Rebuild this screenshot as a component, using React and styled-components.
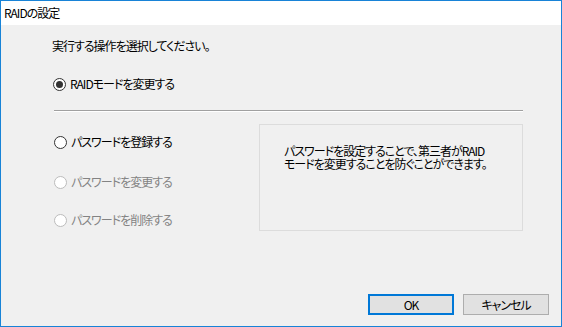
import React from "react";
import styled, { createGlobalStyle } from "styled-components";

const Global = createGlobalStyle`
  html, body { margin: 0; padding: 0; background: #f0f0f0; }
  body { font-family: "Noto Sans CJK JP", "Noto Sans", sans-serif; font-size: 12px; color: #000; }
  * { box-sizing: border-box; }
`;

const Window = styled.div`
  width: 562px;
  height: 327px;
  border: 1px solid #1883d7;
  display: flex;
  flex-direction: column;
  background: #f0f0f0;
  font-feature-settings: "palt";
  letter-spacing: -1px;
`;

const TitleBar = styled.div`
  height: 24px;
  background: #ffffff;
  display: flex;
  align-items: center;
  padding-left: 3px;
  font-size: 12px;
  line-height: 16px;
`;

const Body = styled.div`
  flex: 1;
  display: flex;
  flex-direction: column;
  padding: 13px 12px 11px 51px;
`;

const Prompt = styled.div`
  line-height: 16px;
  height: 16px;
`;

const RadioRow = styled.label`
  display: flex;
  align-items: center;
  gap: 4px;
  height: 16px;
  line-height: 16px;
  margin-left: 1px;
  margin-top: ${(p) => p.$top || 0}px;
  color: ${(p) => (p.$disabled ? "#838383" : "#000")};
`;

const Circle = styled.span`
  width: 13px;
  height: 13px;
  border-radius: 50%;
  border: 1px solid ${(p) => (p.$disabled ? "#bcbcbc" : "#333333")};
  background: #ffffff;
  display: flex;
  align-items: center;
  justify-content: center;
  flex: none;
  &::after {
    content: "";
    display: ${(p) => (p.$checked ? "block" : "none")};
    width: 7px;
    height: 7px;
    border-radius: 50%;
    background: #333333;
  }
`;

const Separator = styled.div`
  margin: 18px 0 0 2px;
  width: 469px;
  height: 2px;
  border-top: 1px solid #a0a0a0;
  border-bottom: 1px solid #ffffff;
`;

const Lower = styled.div`
  display: flex;
  margin-top: 12px;
  margin-left: 1px;
`;

const Options = styled.div`
  width: 206px;
  display: flex;
  flex-direction: column;
  padding-top: 10px;
`;

const InfoBox = styled.div`
  width: 264px;
  height: 107px;
  border: 1px solid #dcdcdc;
  padding: 19px 0 0 24px;
  line-height: 13px;
  white-space: nowrap;
`;

const Footer = styled.div`
  margin-top: auto;
  display: flex;
  justify-content: flex-end;
  gap: 9px;
`;

const Button = styled.button`
  width: 86px;
  height: 21px;
  padding: 0;
  background: #e1e1e1;
  border: ${(p) => (p.$default ? "2px solid #0078d7" : "1px solid #adadad")};
  font-family: inherit;
  font-size: 12px;
  color: #000;
  line-height: 16px;
  letter-spacing: -1px;
  font-feature-settings: "palt";
`;

function Radio({ label, checked, disabled, top }) {
  return (
    <RadioRow $disabled={disabled} $top={top}>
      <Circle $checked={checked} $disabled={disabled} />
      <span>{label}</span>
    </RadioRow>
  );
}

export default function App() {
  return (
    <>
      <Global />
      <Window>
        <TitleBar>RAIDの設定</TitleBar>
        <Body>
          <Prompt>実行する操作を選択してください。</Prompt>
          <Radio label="RAIDモードを変更する" checked top={22} />
          <Separator />
          <Lower>
            <Options>
              <Radio label="パスワードを登録する" />
              <Radio label="パスワードを変更する" disabled top={24} />
              <Radio label="パスワードを削除する" disabled top={22} />
            </Options>
            <InfoBox>
              パスワードを設定することで、第三者がRAID
              <br />
              モードを変更することを防ぐことができます。
            </InfoBox>
          </Lower>
          <Footer>
            <Button $default>OK</Button>
            <Button>キャンセル</Button>
          </Footer>
        </Body>
      </Window>
    </>
  );
}
